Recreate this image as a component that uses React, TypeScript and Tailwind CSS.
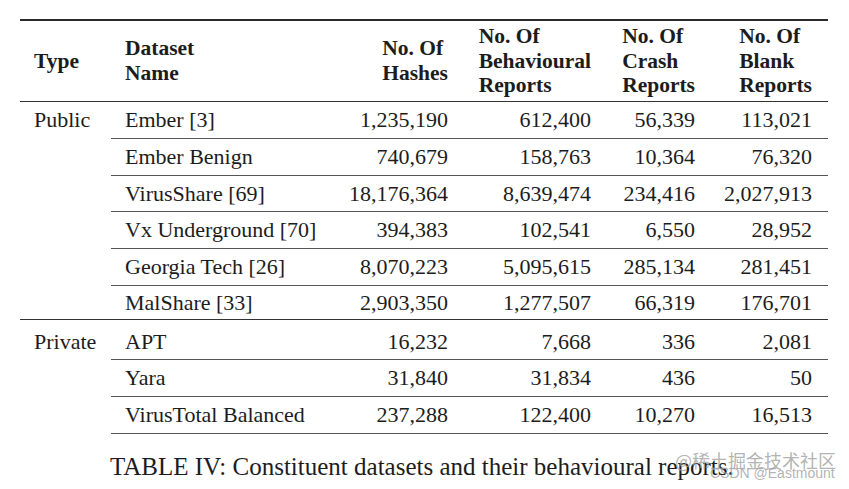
const rows = [
  { group: "Public", name: "Ember [3]", h: "1,235,190", b: "612,400", c: "56,339", k: "113,021", ht: "h-[37px]" },
  { name: "Ember Benign", h: "740,679", b: "158,763", c: "10,364", k: "76,320", ht: "h-[37px]" },
  { name: "VirusShare [69]", h: "18,176,364", b: "8,639,474", c: "234,416", k: "2,027,913", ht: "h-[36px]" },
  { name: "Vx Underground [70]", h: "394,383", b: "102,541", c: "6,550", k: "28,952", ht: "h-[37px]" },
  { name: "Georgia Tech [26]", h: "8,070,223", b: "5,095,615", c: "285,134", k: "281,451", ht: "h-[37px]" },
  { name: "MalShare [33]", h: "2,903,350", b: "1,277,507", c: "66,319", k: "176,701", ht: "h-[32px]", end: true },
  { group: "Private", name: "APT", h: "16,232", b: "7,668", c: "336", k: "2,081", ht: "h-[40px]", pad: true },
  { name: "Yara", h: "31,840", b: "31,834", c: "436", k: "50", ht: "h-[37px]" },
  { name: "VirusTotal Balanced", h: "237,288", b: "122,400", c: "10,270", k: "16,513", ht: "h-[37px]" },
];

function Head({ lines }: { lines: string[] }) {
  return (
    <div className="flex justify-end">
      <div className="text-left">
        {lines.map((l) => (
          <div key={l}>{l}</div>
        ))}
      </div>
    </div>
  );
}

export default function App() {
  const line = "border-b border-[#555]";
  const thick = "border-b-[1.5px] border-[#333]";
  return (
    <div className="relative w-[849px] h-[489px] bg-white text-[#1c1c1c] font-['Liberation_Serif',serif] text-[22px] overflow-hidden">
      <table className="table-fixed border-collapse w-[808px] ml-[20px] mt-[19px]">
        <colgroup>
          <col className="w-[91px]" />
          <col className="w-[224px]" />
          <col className="w-[127px]" />
          <col className="w-[143px]" />
          <col className="w-[104px]" />
          <col className="w-[119px]" />
        </colgroup>
        <thead>
          <tr className="border-t-2 border-[#2a2a2a] h-[81px] font-bold leading-[24.5px] text-[21.5px]">
            <th className={`${thick} text-left align-middle pl-[14px]`}>Type</th>
            <th className={`${thick} text-left align-middle pl-[14px]`}>
              <div>Dataset</div>
              <div>Name</div>
            </th>
            <th className={`${thick} align-middle pr-[14px]`}>
              <Head lines={["No. Of", "Hashes"]} />
            </th>
            <th className={`${thick} align-middle pr-[14px]`}>
              <Head lines={["No. Of", "Behavioural", "Reports"]} />
            </th>
            <th className={`${thick} align-middle pr-[14px]`}>
              <Head lines={["No. Of", "Crash", "Reports"]} />
            </th>
            <th className={`${thick} align-middle pr-[16px]`}>
              <Head lines={["No. Of", "Blank", "Reports"]} />
            </th>
          </tr>
        </thead>
        <tbody>
          {rows.map((r) => {
            const b = `${r.end ? thick : line} align-middle ${r.pad ? "pt-[5px]" : ""}`;
            return (
              <tr key={r.name} className={r.ht}>
                <td className={`pl-[14px] align-middle ${r.pad ? "pt-[5px]" : ""} ${r.end ? thick : ""}`}>
                  {r.group ?? ""}
                </td>
                <td className={`${b} pl-[14px]`}>{r.name}</td>
                <td className={`${b} pr-[14px] text-right`}>{r.h}</td>
                <td className={`${b} pr-[14px] text-right`}>{r.b}</td>
                <td className={`${b} pr-[14px] text-right`}>{r.c}</td>
                <td className={`${b} pr-[16px] text-right`}>{r.k}</td>
              </tr>
            );
          })}
        </tbody>
      </table>
      <p className="ml-[110px] mt-[18px] leading-[30px] text-[25px]">
        TABLE IV: Constituent datasets and their behavioural reports.
      </p>
      <div className="absolute left-[675px] top-[449px] whitespace-nowrap text-[18px] leading-[22px] text-[#a0a0a0]/80 font-['Noto_Sans_CJK_SC',sans-serif]">
        @稀土掘金技术社区
      </div>
      <div className="absolute left-[710px] top-[465px] whitespace-nowrap text-[14px] leading-[16px] text-[#a0a0a0]/80 font-['Liberation_Sans',sans-serif]">
        CSDN @Eastmount
      </div>
    </div>
  );
}
